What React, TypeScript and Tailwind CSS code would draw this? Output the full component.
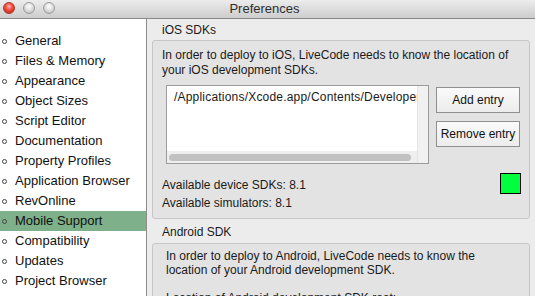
const sections = [
  "General",
  "Files & Memory",
  "Appearance",
  "Object Sizes",
  "Script Editor",
  "Documentation",
  "Property Profiles",
  "Application Browser",
  "RevOnline",
  "Mobile Support",
  "Compatibility",
  "Updates",
  "Project Browser",
];

function TrafficLight({ red }: { red?: boolean }) {
  return (
    <span
      className={
        red
          ? "w-[12px] h-[12px] rounded-full border border-[#a8392f] bg-[radial-gradient(circle_at_50%_35%,#ffb3aa_0%,#f2483a_45%,#b8241a_100%)]"
          : "w-[12px] h-[12px] rounded-full border border-[#9c9c9c] bg-[radial-gradient(circle_at_50%_35%,#ffffff_0%,#dcdcdc_50%,#b4b4b4_100%)]"
      }
    />
  );
}

function Sidebar({ active }: { active: string }) {
  return (
    <div className="w-[147px] shrink-0 bg-white border-r border-[#8d8d8d] pt-[12px] text-[13px] leading-[20px] text-[#111]">
      {sections.map((name) => (
        <div
          key={name}
          className={`flex items-center h-[20px] ${name === active ? "bg-[#7eb089]" : ""}`}
        >
          <span className="ml-[2px] w-[5px] h-[5px] rounded-full border border-[#444]" />
          <span className="ml-[8px] whitespace-nowrap">{name}</span>
        </div>
      ))}
    </div>
  );
}

function PathList() {
  return (
    <div className="ml-[4px] w-[263px] h-[79px] border border-[#9b9b9b] flex">
      <div className="flex-1 flex flex-col min-w-0">
        <div className="flex-1 bg-white overflow-hidden pl-[7px] pt-[4px] leading-[15px] tracking-[0.2px] whitespace-nowrap">
          /Applications/Xcode.app/Contents/Developer
        </div>
        <div className="h-[12px] bg-[#efefef] flex items-center pl-[2px] pr-[6px]">
          <div className="h-[7px] w-full rounded-full bg-[#c1c1c1]" />
        </div>
      </div>
      <div className="w-[11px] bg-[#f1f1f1] border-l border-[#e4e4e4]" />
    </div>
  );
}

function MacButton({ label }: { label: string }) {
  return (
    <button className="w-[84px] h-[26px] border border-[#8f8f8f] bg-gradient-to-b from-[#fafafa] to-[#ececec] text-[12px] text-[#111]">
      {label}
    </button>
  );
}

export default function App() {
  return (
    <div className="w-[535px] h-[296px] overflow-hidden flex flex-col bg-[#ececec] font-['Liberation_Sans',Arial,sans-serif] text-[#1a1a1a]">
      <div className="h-[19px] shrink-0 relative flex items-center bg-gradient-to-b from-[#ececec] to-[#cdcdcd] border-b border-[#8a8a8a]">
        <div className="absolute left-[3px] top-[2px] flex gap-[8px]">
          <TrafficLight red />
          <TrafficLight />
          <TrafficLight />
        </div>
        <div className="flex-1 text-center text-[13px] text-[#2e2e2e] leading-[18px] pr-[6px]">Preferences</div>
      </div>

      <div className="flex-1 flex min-h-0">
        <Sidebar active="Mobile Support" />

        <div className="flex-1 px-[5px] text-[12px]">
          <div className="mt-[4px] pl-[10px] leading-[15px]">iOS SDKs</div>
          <div className="mt-[2px] border border-[#c6c6c6] rounded-[3px] bg-[#e3e3e3] pt-[7px] pb-[6px] pl-[9px] pr-[8px]">
            <p className="leading-[15px]">
              In order to deploy to iOS, LiveCode needs to know the location of
              <br />
              your iOS development SDKs.
            </p>
            <div className="mt-[7px] flex items-start gap-[7px]">
              <PathList />
              <div className="mt-[2px] flex flex-col gap-[8px]">
                <MacButton label="Add entry" />
                <MacButton label="Remove entry" />
              </div>
            </div>
            <div className="mt-[9px] flex items-start justify-between">
              <div className="mt-[3px] leading-[18px]">
                <div>Available device SDKs: 8.1</div>
                <div>Available simulators: 8.1</div>
              </div>
              <div className="w-[21px] h-[21px] bg-[#00ff3c] border border-black" />
            </div>
          </div>

          <div className="mt-[6px] pl-[10px] leading-[15px]">Android SDK</div>
          <div className="mt-[3px] border border-[#c6c6c6] rounded-[3px] bg-[#e3e3e3] pt-[5px] pl-[13px] pr-[8px] h-[80px]">
            <p className="leading-[14px]">
              In order to deploy to Android, LiveCode needs to know the
              <br />
              location of your Android development SDK.
            </p>
            <p className="mt-[14px] leading-[14px]">Location of Android development SDK root:</p>
          </div>
        </div>
      </div>
    </div>
  );
}
